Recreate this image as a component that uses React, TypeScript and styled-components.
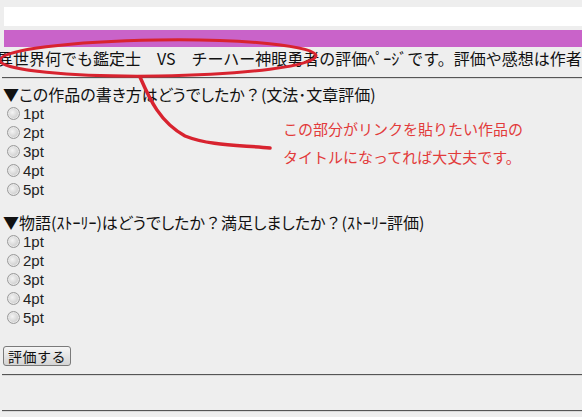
import React from "react";
import styled, { createGlobalStyle } from "styled-components";

const Global = createGlobalStyle`
  html, body { margin: 0; padding: 0; background: #eeeeee; }
  body {
    font-family: "Noto Sans CJK JP", "Noto Sans", sans-serif;
    font-size: 16px;
    color: #111;
    overflow: hidden;
  }
`;

const Page = styled.div`
  position: relative;
  width: 582px;
  height: 417px;
  overflow: hidden;
  display: flex;
  flex-direction: column;
`;

const WhiteBar = styled.div`
  margin: 7px 0 0 4px;
  height: 19px;
  background: #ffffff;
`;

const PurpleBar = styled.div`
  margin: 4px 0 0 4px;
  height: 17px;
  background: #c963c9;
`;

const Marquee = styled.div`
  height: 22px;
  line-height: 22px;
  white-space: nowrap;
  overflow: hidden;
  font-size: 16px;
  text-indent: -3px;
`;

const Rule = styled.hr<{ $top: number }>`
  margin: ${(p) => p.$top}px 0 0 2px;
  height: 0;
  border: 0;
  border-top: 1px solid #555;
  border-bottom: 1px solid #d8d8d8;
`;

const Heading = styled.div<{ $top: number }>`
  margin: ${(p) => p.$top}px 0 0 3px;
  height: 20px;
  line-height: 20px;
  font-size: 16px;
  white-space: nowrap;
  font-feature-settings: "palt" 1;
`;

const Wide = styled.span`
  font-feature-settings: "palt" 0;
`;

const Options = styled.div`
  display: flex;
  flex-direction: column;
  margin-left: 7px;
`;

const OptionRow = styled.label`
  display: flex;
  align-items: center;
  height: 19px;
  gap: 3px;
  font-size: 15px;
  font-family: "Liberation Sans", "Noto Sans", sans-serif;
  color: #222;
`;

const Radio = styled.span`
  width: 11px;
  height: 11px;
  border-radius: 50%;
  border: 1px solid #9a9a9a;
  background: radial-gradient(circle at 40% 40%, #f4f4f4 0%, #d6d6d6 55%, #bdbdbd 100%);
  box-shadow: inset 0 0 0 1px #e8e8e8;
  flex: none;
`;

const Submit = styled.button`
  margin: 19px 0 0 3px;
  width: 68px;
  height: 20px;
  padding: 0;
  border: 1px solid #7a7a7a;
  border-radius: 3px;
  background: linear-gradient(#f6f6f6, #e4e4e4 50%, #d4d4d4);
  font-family: "Noto Sans CJK JP", sans-serif;
  font-size: 14px;
  line-height: 18px;
  letter-spacing: 0.5px;
  color: #111;
  align-self: flex-start;
`;

const Overlay = styled.svg`
  position: absolute;
  left: 0;
  top: 0;
  pointer-events: none;
`;

const Note = styled.div`
  position: absolute;
  left: 283px;
  top: 115px;
  color: #e23b3b;
  font-size: 15px;
  line-height: 28px;
  white-space: nowrap;
`;

const points = ["1pt", "2pt", "3pt", "4pt", "5pt"];

function Question({ title, top }: { title: React.ReactNode; top: number }) {
  return (
    <>
      <Heading $top={top}>{title}</Heading>
      <Options>
        {points.map((p) => (
          <OptionRow key={p}>
            <Radio />
            {p}
          </OptionRow>
        ))}
      </Options>
    </>
  );
}

export default function App() {
  return (
    <Page>
      <Global />
      <WhiteBar />
      <PurpleBar />
      <Marquee>
        異世界何でも鑑定士　VS　チーハー神眼勇者の評価ﾍﾟｰｼﾞです。評価や感想は作者の尽力の糧になります。
      </Marquee>
      <Rule $top={8} />
      <Question
        title={
          <>
            ▼この作品の書き方はどうでしたか<Wide>？</Wide>(文法･文章評価)
          </>
        }
        top={5}
      />
      <Question
        title={
          <>
            ▼物語(ｽﾄｰﾘｰ)はどうでしたか<Wide>？</Wide>満足しましたか<Wide>？</Wide>(ｽﾄｰﾘｰ評価)
          </>
        }
        top={13}
      />
      <Submit>評価する</Submit>
      <Rule $top={8} />
      <Rule $top={34} />
      <Overlay width="582" height="417" viewBox="0 0 582 417">
        <ellipse
          cx="158"
          cy="58"
          rx="158"
          ry="18"
          fill="none"
          stroke="#d8232f"
          strokeWidth="3"
          transform="rotate(-0.8 158 58)"
        />
        <path
          d="M140 77 C150 100, 160 122, 185 136 C210 146, 240 145, 270 148"
          fill="none"
          stroke="#d8232f"
          strokeWidth="3.5"
          strokeLinecap="round"
        />
      </Overlay>
      <Note>
        この部分がリンクを貼りたい作品の
        <br />
        タイトルになってれば大丈夫です。
      </Note>
    </Page>
  );
}
